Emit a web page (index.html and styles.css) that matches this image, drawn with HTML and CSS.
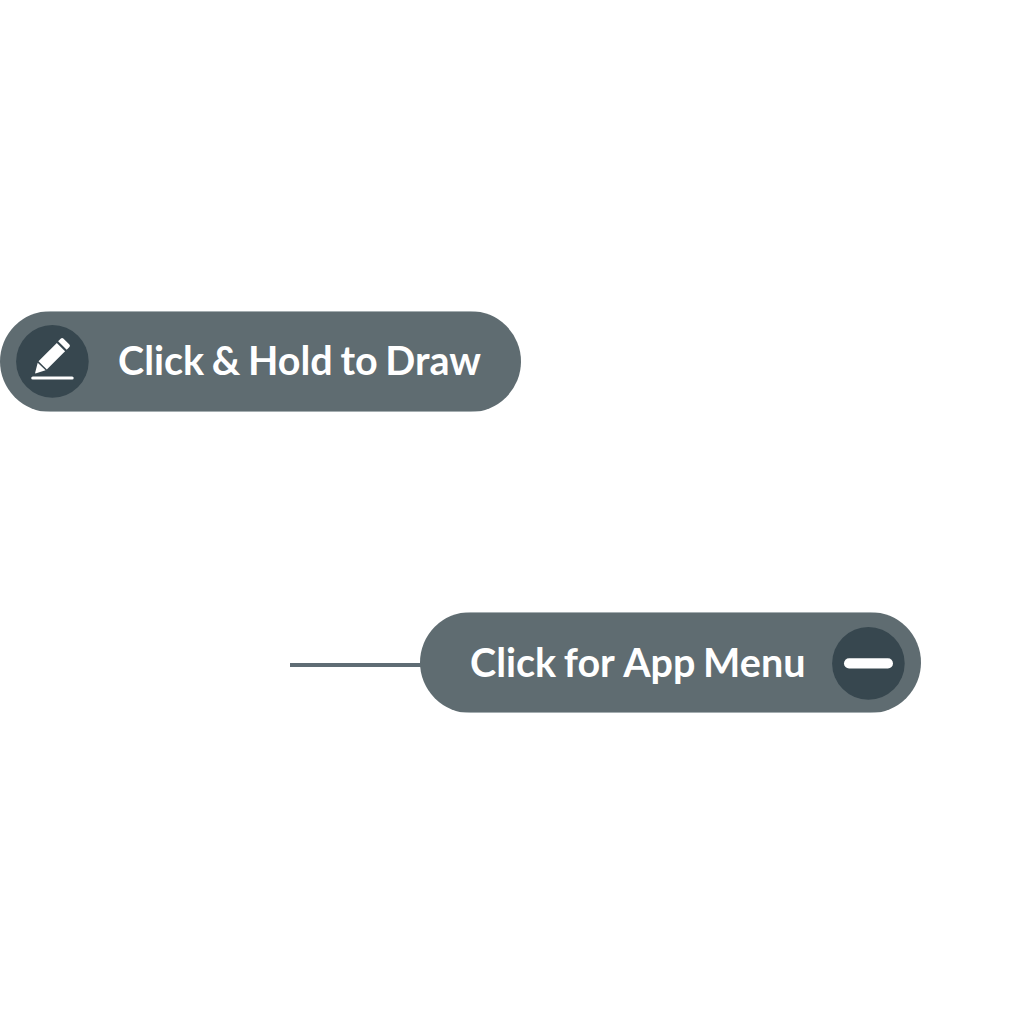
FILE: index.html
```html
<!DOCTYPE html>
<html lang="en">
<head>
<meta charset="utf-8">
<title>Drawing controls</title>
<link rel="stylesheet" href="styles.css">
</head>
<body>
<main class="controls">
  <button class="pill pill-draw">
    <svg class="badge" viewBox="0 0 73 73" aria-hidden="true">
      <circle class="disc" cx="36.4" cy="36.4" r="36.3"/>
      <path d="M44.9 13.5Q46.1 12.3 47.3 13.5L53.4 19.5Q54.6 20.7 53.4 21.9L50.7 24.8L42.1 16.3Z"/>
      <path d="M40.8 17.9L49.1 26.3L30.8 44.6L22.5 36.3Z"/>
      <path d="M21.7 37.7L29.6 45.3L20.2 48.3Q18.8 48.7 19.2 47.4Z"/>
      <rect x="15.2" y="51.4" width="42.5" height="3.2" rx="1.6"/>
    </svg>
    <span class="label">Click &amp; Hold to Draw</span>
  </button>
  <div class="menu-row">
    <span class="connector"></span>
    <button class="pill pill-menu">
      <span class="label">Click for <span class="app">App</span> Menu</span>
      <svg class="badge" viewBox="0 0 73 73" aria-hidden="true">
        <circle class="disc" cx="36.4" cy="36.4" r="36.3"/>
        <rect x="12" y="31.3" width="49" height="10.2" rx="5.1"/>
      </svg>
    </button>
  </div>
</main>
</body>
</html>
```
FILE: styles.css
```css
body { margin: 0; background: #fff; }
.controls {
  display: flex;
  flex-direction: column;
  align-items: flex-start;
  gap: 200px;
  padding-top: 311px;
}
.pill {
  display: flex;
  align-items: flex-start;
  box-sizing: border-box;
  height: 101px;
  border: 0;
  border-radius: 50.5px;
  background: linear-gradient(#a4adb0 1px, #5f6c71 1px, #5f6c71 100px, #a4adb0 100px);
  color: #fff;
  font: 700 39.5px/48px Lato, sans-serif;
  word-spacing: -1.95px;
}
.pill-draw { width: 521px; padding: 14px 0 0 16px; gap: 29px; }
.pill-menu { width: 501px; padding: 15px 16px 0 50px; justify-content: space-between; }
.badge { display: block; flex: none; width: 73px; height: 73px; fill: #fff; }
.disc { fill: #37474f; }
.label { margin-top: 11px; white-space: nowrap; }
.app { margin-left: 1.5px; }
.menu-row { display: flex; align-items: center; padding-left: 290px; }
.connector { width: 131px; height: 4px; margin: 5px -1px 0 0; background: #5f6c74; }
```
